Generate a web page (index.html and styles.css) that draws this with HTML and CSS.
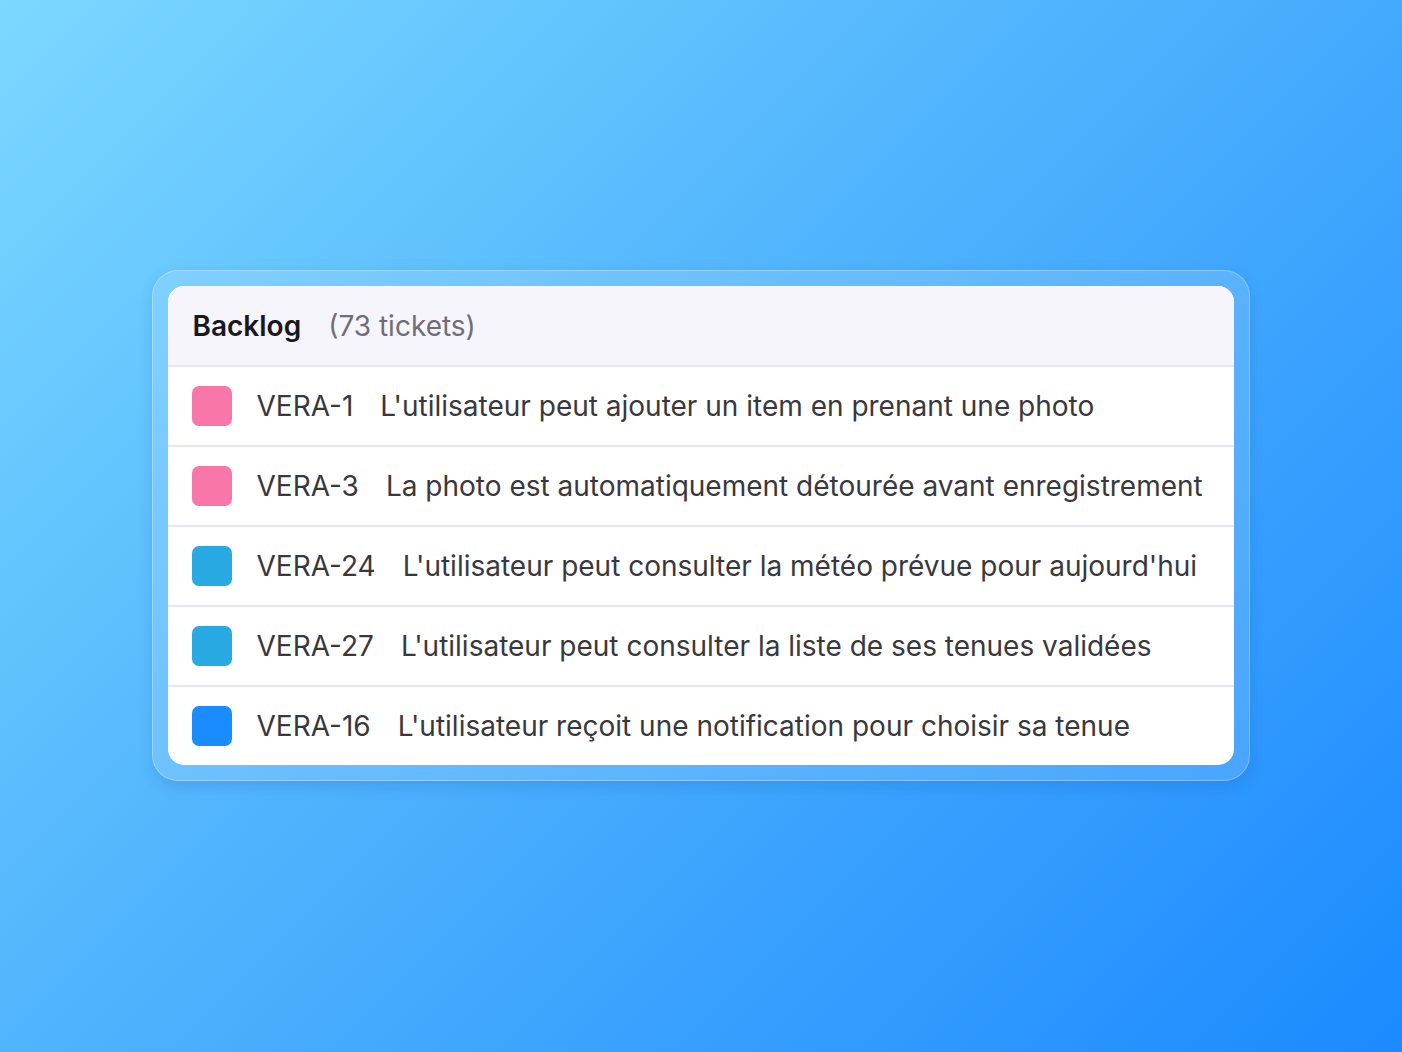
FILE: index.html
```html
<!DOCTYPE html>
<html lang="fr">
<head>
<meta charset="utf-8"/>
<title>Backlog</title>
<link rel="stylesheet" href="styles.css">
</head>
<body>
<div class="stage">
  <div class="frame">
    <div class="board">
      <div class="board-head">
        <span class="board-title">Backlog</span>
        <span class="board-count">(73 tickets)</span>
      </div>
      <div class="ticket">
        <span class="tag tag-pink"></span>
        <span class="ticket-id">VERA-1</span>
        <span class="ticket-name">L'utilisateur peut ajouter un item en prenant une photo</span>
      </div>
      <div class="ticket">
        <span class="tag tag-pink"></span>
        <span class="ticket-id">VERA-3</span>
        <span class="ticket-name">La photo est automatiquement détourée avant enregistrement</span>
      </div>
      <div class="ticket">
        <span class="tag tag-cyan"></span>
        <span class="ticket-id">VERA-24</span>
        <span class="ticket-name">L'utilisateur peut consulter la météo prévue pour aujourd'hui</span>
      </div>
      <div class="ticket">
        <span class="tag tag-cyan"></span>
        <span class="ticket-id">VERA-27</span>
        <span class="ticket-name">L'utilisateur peut consulter la liste de ses tenues validées</span>
      </div>
      <div class="ticket">
        <span class="tag tag-blue"></span>
        <span class="ticket-id">VERA-16</span>
        <span class="ticket-name">L'utilisateur reçoit une notification pour choisir sa tenue</span>
      </div>
    </div>
  </div>
</div>
</body>
</html>
```

FILE: styles.css
```css
html, body { margin: 0; height: 100%; }
body {
  font-family: Inter, "Noto Sans", sans-serif;
  background: linear-gradient(135deg, #7cd8ff 0%, #4fb3fd 45%, #1c8aff 100%);
}
.stage {
  height: 100%;
  display: flex;
  justify-content: center;
  padding-top: 270px;
  box-sizing: border-box;
}
.frame {
  width: 1066px;
  height: 479px;
  padding: 15px;
  border-radius: 26px;
  background: rgba(255, 255, 255, 0.14);
  border: 1.5px solid rgba(255, 255, 255, 0.28);
  box-shadow: 0 6px 14px rgba(20, 80, 160, 0.18);
  margin-right: 1px;
}
.board {
  background: #fff;
  border-radius: 16px;
  overflow: hidden;
}
.board-head {
  height: 79px;
  background: #f5f5fb;
  display: flex;
  align-items: center;
  padding-left: 25px;
  gap: 27px;
  font-size: 28px;
}
.board-title { font-weight: 600; color: #18181d; }
.board-count { color: #6e6e7a; }
.ticket {
  height: 78px;
  border-top: 2px solid #e6e7f3;
  display: flex;
  align-items: center;
  padding-left: 24px;
  font-size: 28px;
  color: #38383d;
  white-space: nowrap;
}
.tag {
  width: 40px;
  height: 40px;
  border-radius: 7px;
  margin-right: 25px;
  flex: none;
}
.tag-pink { background: #f877a8; }
.tag-cyan { background: #28a9e2; }
.tag-blue { background: #1a8cff; }
.ticket-id { margin-right: 27px; }
```
